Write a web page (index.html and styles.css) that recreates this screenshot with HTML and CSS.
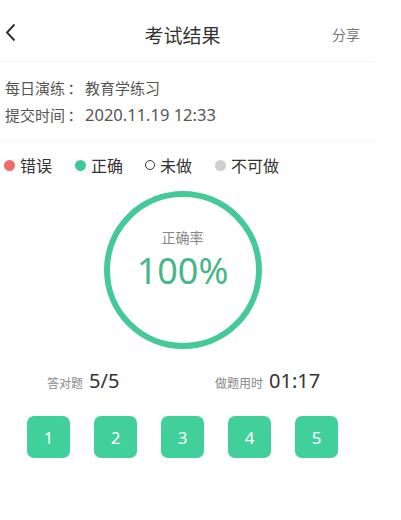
FILE: index.html
```html
<!DOCTYPE html>
<html>
<head>
  <meta charset="utf-8">
  <title>考试结果</title>
  <link rel="stylesheet" href="styles.css">
</head>
<body>
  <div class="page">
    <header class="topbar">
      <div class="back">
        <svg width="11" height="19" viewBox="0 0 11 19"><path d="M9.5 1.5 L2 9.5 L9.5 17.5" fill="none" stroke="#333" stroke-width="2"/></svg>
      </div>
      <h1 class="title">考试结果</h1>
      <div class="share">分享</div>
    </header>

    <div class="info">
      <p>每日演练<span class="colon">：</span>教育学练习</p>
      <p>提交时间<span class="colon">：</span><span class="num">2020.11.19 12:33</span></p>
    </div>

    <ul class="legend">
      <li><span class="dot wrong"></span>错误</li>
      <li><span class="dot right"></span>正确</li>
      <li><span class="dot todo"></span>未做</li>
      <li><span class="dot na"></span>不可做</li>
    </ul>

    <div class="ring">
      <div class="ring-label">正确率</div>
      <div class="ring-value">100%</div>
    </div>

    <div class="stats">
      <div class="stat first"><span class="stat-label">答对题</span><span class="stat-value">5/5</span></div>
      <div class="stat"><span class="stat-label">做题用时</span><span class="stat-value">01:17</span></div>
    </div>

    <div class="answers">
      <div class="answer">1</div>
      <div class="answer">2</div>
      <div class="answer">3</div>
      <div class="answer">4</div>
      <div class="answer">5</div>
    </div>
  </div>
</body>
</html>
```

FILE: styles.css
```css
body {
  margin: 0;
  background-color: #fff;
  font-family: "Noto Sans CJK SC", "Noto Sans", sans-serif;
  color: #444;
}

.page {
  width: 365px;
}

.topbar {
  display: grid;
  grid-template-columns: 1fr auto 1fr;
  align-items: center;
  height: 62px;
  width: 375px;
  padding: 0 15px 0 5px;
  box-sizing: border-box;
  border-bottom: 1px solid #f4f4f4;
}

.back {
  display: flex;
  align-items: center;
  padding-top: 4px;
}

.title {
  margin: 0;
  font-size: 19px;
  font-weight: normal;
  color: #333;
  padding-top: 7px;
}

.share {
  justify-self: end;
  font-size: 14px;
  color: #777;
  padding-top: 7px;
}

.info {
  width: 375px;
  padding: 12px 0 12px 5px;
  box-sizing: border-box;
  border-bottom: 1px solid #f4f4f4;
}

.info p {
  margin: 0;
  font-size: 15px;
  line-height: 27px;
  color: #555;
  display: flex;
  align-items: baseline;
}

.colon {
  display: inline-block;
  width: 20px;
  text-align: center;
}

.num {
  font-family: "Noto Sans", sans-serif;
  font-size: 16.5px;
}

.legend {
  list-style-type: none;
  margin: 0;
  padding: 12px 0 0 4px;
  display: flex;
  align-items: center;
  font-size: 16px;
  color: #333;
  line-height: 24px;
}

.legend li {
  display: flex;
  align-items: center;
  margin-right: 23px;
}

.dot {
  display: inline-block;
  width: 11px;
  height: 11px;
  border-radius: 50%;
  margin-right: 5px;
  box-sizing: border-box;
}

.dot.wrong { background-color: #ee6b68; }
.dot.right { background-color: #3ec996; }
.dot.todo { border: 1.5px solid #333; width: 10px; height: 10px; margin-right: 5px; margin-left: -1px; }
.dot.na { background-color: #cfcfcf; }

.ring {
  width: 158px;
  height: 158px;
  margin: 14px auto 0;
  border: 6px solid #45c999;
  border-radius: 50%;
  box-sizing: border-box;
  display: flex;
  flex-direction: column;
  align-items: center;
}

.ring-label {
  margin-top: 30px;
  font-size: 14px;
  color: #888;
}

.ring-value {
  font-family: "Noto Sans", sans-serif;
  font-size: 36px;
  line-height: 40px;
  margin-top: 4px;
  color: #48b68b;
}

.stats {
  display: flex;
  align-items: baseline;
  padding-left: 47px;
  margin-top: 18px;
}

.stat {
  display: flex;
  align-items: baseline;
}

.stat.first {
  width: 168px;
}

.stat-label {
  font-size: 12px;
  color: #888;
  margin-right: 6px;
}

.stat-value {
  font-family: "Noto Sans", sans-serif;
  font-size: 20px;
  color: #333;
}

.answers {
  display: flex;
  justify-content: center;
  gap: 24px;
  margin-top: 22px;
}

.answer {
  width: 43px;
  height: 42px;
  border-radius: 7px;
  background-color: #41cf9b;
  color: #fff;
  font-family: "Noto Sans", sans-serif;
  font-size: 17px;
  display: flex;
  align-items: center;
  justify-content: center;
}
```
